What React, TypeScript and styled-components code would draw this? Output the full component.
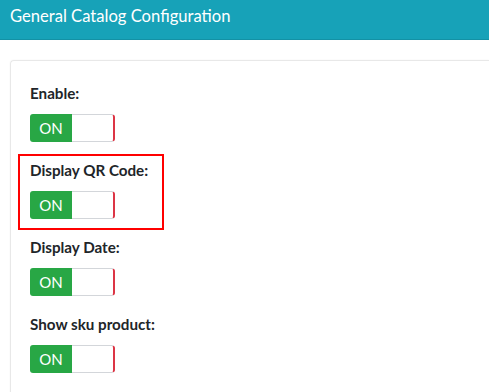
import React from "react";
import styled, { createGlobalStyle } from "styled-components";

const Global = createGlobalStyle`
  html, body { margin: 0; padding: 0; background: #ffffff; }
  body { font-family: Lato, "Noto Sans", sans-serif; overflow: hidden; }
`;

const Page = styled.div`
  width: 489px;
  height: 392px;
  overflow: hidden;
  background: #ffffff;
`;

const Header = styled.div`
  height: 40px;
  background: #17a2b8;
  border-bottom: 1px solid #1391a5;
  display: flex;
  align-items: center;
  padding: 0 10px 7px;
  box-sizing: border-box;
`;

const Title = styled.h1`
  margin: 0;
  font-size: 16.6px;
  font-weight: 400;
  color: #ffffff;
`;

const Body = styled.div`
  padding: 20px 0 0 10px;
`;

const Card = styled.div`
  border: 1px solid #e8e8e8;
  border-right: none;
  border-radius: 4px 0 0 0;
  box-shadow: 0 0 2px rgba(0, 0, 0, 0.05);
  padding: 22px 19px 0;
  height: 400px;
`;

const Group = styled.div`
  position: relative;
  margin-bottom: 18px;
  width: max-content;
`;

const Label = styled.div`
  font-size: 15.2px;
  line-height: 21px;
  font-weight: 700;
  color: #212529;
  margin-bottom: 10px;
`;

const Toggle = styled.div`
  display: flex;
  width: 85px;
  height: 28px;
  border-radius: 3px;
  overflow: hidden;
  box-sizing: border-box;
`;

const OnPart = styled.div`
  width: 42px;
  background: #28a745;
  color: #ffffff;
  font-size: 15px;
  display: flex;
  align-items: center;
  justify-content: center;
`;

const OffPart = styled.div`
  flex: 1;
  background: #ffffff;
  border: 1px solid #d3d6da;
  border-left: none;
  border-right: 2px solid #dc3545;
  border-radius: 0 3px 3px 0;
`;

const Highlight = styled.div`
  position: absolute;
  top: -6px;
  left: -12px;
  width: 146px;
  height: 76px;
  border: 2px solid #ff0000;
  box-sizing: border-box;
  pointer-events: none;
`;

const items = [
  { label: "Enable:", highlight: false },
  { label: "Display QR Code:", highlight: true },
  { label: "Display Date:", highlight: false },
  { label: "Show sku product:", highlight: false },
];

export default function App() {
  return (
    <Page>
      <Global />
      <Header>
        <Title>General Catalog Configuration</Title>
      </Header>
      <Body>
        <Card>
          {items.map((it) => (
            <Group key={it.label}>
              <Label>{it.label}</Label>
              <Toggle>
                <OnPart>ON</OnPart>
                <OffPart />
              </Toggle>
              {it.highlight && <Highlight />}
            </Group>
          ))}
        </Card>
      </Body>
    </Page>
  );
}
